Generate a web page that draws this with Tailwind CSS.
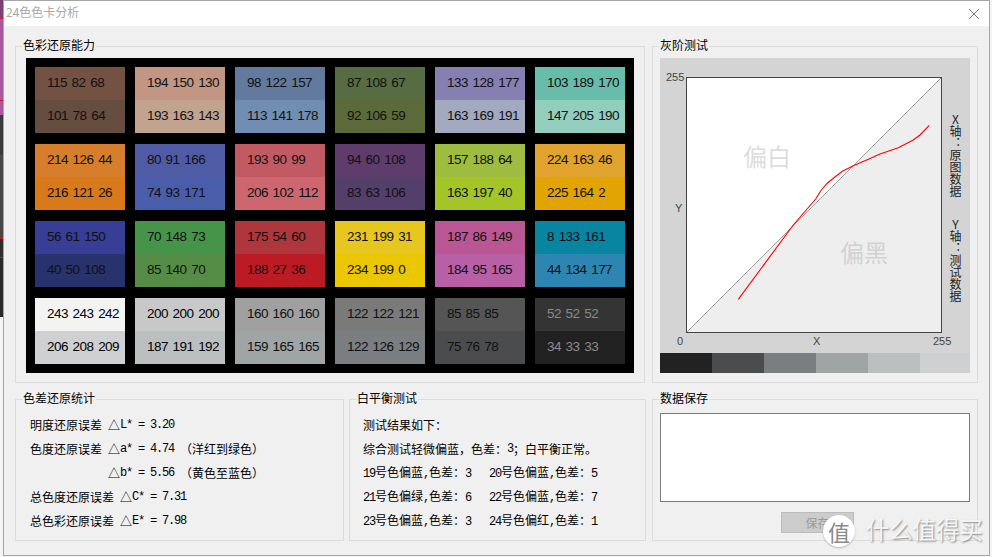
<!DOCTYPE html>
<html lang="zh-CN">

<head>
    <meta charset="UTF-8">
    <title>24色色卡分析</title>
    <script src="https://cdn.jsdelivr.net/npm/@tailwindcss/browser@4"></script>
</head>

<body class="bg-[#f4f4f4]">
    <div class="relative flex w-[992px] h-[557px] overflow-hidden text-[12px] text-black [font-family:'Noto_Sans_CJK_SC',sans-serif]">
        <!-- desktop behind the window -->
        <div class="w-[3px] h-[317px] flex flex-col shrink-0 bg-[#2a2a2a]">
            <div class="h-[18px] bg-[#7d3f74]"></div>
            <div class="h-px bg-[#e01010]"></div>
            <div class="h-[81px] bg-[#a8589c]"></div>
            <div class="h-px bg-[#e01010]"></div>
            <div class="h-[14px] bg-[#a8589c]"></div>
            <div class="h-[40px] bg-[#3a3a3a]"></div>
            <div class="h-px bg-[#e01010]"></div>
            <div class="h-[82px] bg-[#484848]"></div>
            <div class="h-px bg-[#e01010]"></div>
            <div class="h-[18px] bg-[#2e2e2e]"></div>
            <div class="h-px bg-[#e01010]"></div>
        </div>

        <div class="w-[987px] h-[556px] flex flex-col bg-[#f0f0f0] border border-[#a5a5a5] shrink-0">
            <div class="h-[25px] bg-white flex items-center justify-between pl-[2px] pr-[10px] shrink-0">
                <span class="text-[#a9a9a9] -mt-[3px]">24色色卡分析</span>
                <svg width="10" height="10" viewBox="0 0 10 10">
                    <path d="M0 0L10 10M10 0L0 10" stroke="#777777" stroke-width="1" fill="none" />
                </svg>
            </div>

            <div class="flex gap-[7px] pl-[11px] pt-[20px]">
                <!-- colour checker -->
                <div class="relative w-[630px] h-[337px] border border-[#dcdcdc] pt-[11px] pl-[10px]">
                    <span class="absolute -top-[10px] left-[6px] px-px bg-[#f0f0f0] leading-[16px]">色彩还原能力</span>
                    <div class="w-[608px] h-[315px] bg-black p-[9px] grid grid-cols-6 gap-x-[10px] gap-y-[11px] text-[13.5px] tracking-[-0.55px] [word-spacing:1.5px] text-[#111111] [font-family:'Liberation_Sans',sans-serif]">
                        <div class="h-[66px] grid grid-rows-2"><div class="pl-[12px] flex items-center bg-[rgb(115,82,68)]">115 82 68</div><div class="pl-[12px] flex items-center bg-[rgb(101,78,64)]">101 78 64</div></div>
                        <div class="h-[66px] grid grid-rows-2"><div class="pl-[12px] flex items-center bg-[rgb(194,150,130)]">194 150 130</div><div class="pl-[12px] flex items-center bg-[rgb(193,163,143)]">193 163 143</div></div>
                        <div class="h-[66px] grid grid-rows-2"><div class="pl-[12px] flex items-center bg-[rgb(98,122,157)]">98 122 157</div><div class="pl-[12px] flex items-center bg-[rgb(113,141,178)]">113 141 178</div></div>
                        <div class="h-[66px] grid grid-rows-2"><div class="pl-[12px] flex items-center bg-[rgb(87,108,67)]">87 108 67</div><div class="pl-[12px] flex items-center bg-[rgb(92,106,59)]">92 106 59</div></div>
                        <div class="h-[66px] grid grid-rows-2"><div class="pl-[12px] flex items-center bg-[rgb(133,128,177)]">133 128 177</div><div class="pl-[12px] flex items-center bg-[rgb(163,169,191)]">163 169 191</div></div>
                        <div class="h-[66px] grid grid-rows-2"><div class="pl-[12px] flex items-center bg-[rgb(103,189,170)]">103 189 170</div><div class="pl-[12px] flex items-center bg-[rgb(147,205,190)]">147 205 190</div></div>

                        <div class="h-[66px] grid grid-rows-2"><div class="pl-[12px] flex items-center bg-[rgb(214,126,44)]">214 126 44</div><div class="pl-[12px] flex items-center bg-[rgb(216,121,26)]">216 121 26</div></div>
                        <div class="h-[66px] grid grid-rows-2"><div class="pl-[12px] flex items-center bg-[rgb(80,91,166)]">80 91 166</div><div class="pl-[12px] flex items-center bg-[rgb(74,93,171)]">74 93 171</div></div>
                        <div class="h-[66px] grid grid-rows-2"><div class="pl-[12px] flex items-center bg-[rgb(193,90,99)]">193 90 99</div><div class="pl-[12px] flex items-center bg-[rgb(206,102,112)]">206 102 112</div></div>
                        <div class="h-[66px] grid grid-rows-2"><div class="pl-[12px] flex items-center bg-[rgb(94,60,108)]">94 60 108</div><div class="pl-[12px] flex items-center bg-[rgb(83,63,106)]">83 63 106</div></div>
                        <div class="h-[66px] grid grid-rows-2"><div class="pl-[12px] flex items-center bg-[rgb(157,188,64)]">157 188 64</div><div class="pl-[12px] flex items-center bg-[rgb(163,197,40)]">163 197 40</div></div>
                        <div class="h-[66px] grid grid-rows-2"><div class="pl-[12px] flex items-center bg-[rgb(224,163,46)]">224 163 46</div><div class="pl-[12px] flex items-center bg-[rgb(225,164,2)]">225 164 2</div></div>

                        <div class="h-[66px] grid grid-rows-2"><div class="pl-[12px] flex items-center bg-[rgb(56,61,150)]">56 61 150</div><div class="pl-[12px] flex items-center bg-[rgb(40,50,108)]">40 50 108</div></div>
                        <div class="h-[66px] grid grid-rows-2"><div class="pl-[12px] flex items-center bg-[rgb(70,148,73)]">70 148 73</div><div class="pl-[12px] flex items-center bg-[rgb(85,140,70)]">85 140 70</div></div>
                        <div class="h-[66px] grid grid-rows-2"><div class="pl-[12px] flex items-center bg-[rgb(175,54,60)]">175 54 60</div><div class="pl-[12px] flex items-center bg-[rgb(188,27,36)]">188 27 36</div></div>
                        <div class="h-[66px] grid grid-rows-2"><div class="pl-[12px] flex items-center bg-[rgb(231,199,31)]">231 199 31</div><div class="pl-[12px] flex items-center bg-[rgb(234,199,0)]">234 199 0</div></div>
                        <div class="h-[66px] grid grid-rows-2"><div class="pl-[12px] flex items-center bg-[rgb(187,86,149)]">187 86 149</div><div class="pl-[12px] flex items-center bg-[rgb(184,95,165)]">184 95 165</div></div>
                        <div class="h-[66px] grid grid-rows-2"><div class="pl-[12px] flex items-center bg-[rgb(8,133,161)]">8 133 161</div><div class="pl-[12px] flex items-center bg-[rgb(44,134,177)]">44 134 177</div></div>

                        <div class="h-[66px] grid grid-rows-2"><div class="pl-[12px] flex items-center text-black bg-[rgb(243,243,242)]">243 243 242</div><div class="pl-[12px] flex items-center text-black bg-[rgb(206,208,209)]">206 208 209</div></div>
                        <div class="h-[66px] grid grid-rows-2"><div class="pl-[12px] flex items-center text-black bg-[rgb(200,200,200)]">200 200 200</div><div class="pl-[12px] flex items-center text-black bg-[rgb(187,191,192)]">187 191 192</div></div>
                        <div class="h-[66px] grid grid-rows-2"><div class="pl-[12px] flex items-center bg-[rgb(160,160,160)]">160 160 160</div><div class="pl-[12px] flex items-center bg-[rgb(159,165,165)]">159 165 165</div></div>
                        <div class="h-[66px] grid grid-rows-2"><div class="pl-[12px] flex items-center bg-[rgb(122,122,121)]">122 122 121</div><div class="pl-[12px] flex items-center bg-[rgb(122,126,129)]">122 126 129</div></div>
                        <div class="h-[66px] grid grid-rows-2"><div class="pl-[12px] flex items-center bg-[rgb(85,85,85)]">85 85 85</div><div class="pl-[12px] flex items-center bg-[rgb(75,76,78)]">75 76 78</div></div>
                        <div class="h-[66px] grid grid-rows-2"><div class="pl-[12px] flex items-center text-[#8a8a8a] bg-[rgb(52,52,52)]">52 52 52</div><div class="pl-[12px] flex items-center text-[#8a8a8a] bg-[rgb(34,33,33)]">34 33 33</div></div>
                    </div>
                </div>

                <!-- grey scale -->
                <div class="relative w-[326px] h-[337px] border border-[#dcdcdc] pt-[11px] pl-[7px]">
                    <span class="absolute -top-[10px] left-[6px] px-px bg-[#f0f0f0] leading-[16px]">灰阶测试</span>
                    <div class="w-[310px] h-[315px] bg-[#d4d4d4] flex flex-col">
                        <div class="flex pt-[19px]">
                            <div class="w-[26px] shrink-0 text-[11px] text-[#444444] [font-family:'Liberation_Sans',sans-serif]">
                                <div class="pl-[6px] leading-none -mt-[5px]">255</div>
                                <div class="pl-[15px] mt-[120px] leading-none">Y</div>
                            </div>
                            <svg width="256" height="256" viewBox="0 0 256 256" class="shrink-0">
                                <rect width="256" height="256" fill="#ffffff" />
                                <path d="M0 256L256 0V256Z" fill="#eeeeee" />
                                <path d="M0 256L256 0" stroke="#a0a0a0" stroke-width="1" fill="none" />
                                <rect x="0.5" y="0.5" width="255" height="255" fill="none" stroke="#444444" />
                                <path d="M52.3 222.3L107.3 148L129.7 122L135 113.5L141 106.5L147 101.5L156 94.5L167.3 88.7L180.7 83L194 77L212.3 70.7L227.3 63L234 58L243.3 48.3" stroke="#ff0000" stroke-width="1.1" fill="none" />
                                <text x="57" y="89" font-size="24" fill="#dddddd">偏白</text>
                                <text x="154" y="185" font-size="24" fill="#d2d2d2">偏黑</text>
                            </svg>
                            <div class="w-[26px] pt-[36px] flex flex-col items-center text-[#222222]">
                                <span class="[writing-mode:vertical-rl] [text-orientation:upright] leading-[14px]">X轴：原图数据</span>
                                <span class="mt-[21px] [writing-mode:vertical-rl] [text-orientation:upright] leading-[14px]">Y轴：测试数据</span>
                            </div>
                        </div>
                        <div class="flex-1 relative text-[11px] text-[#444444] [font-family:'Liberation_Sans',sans-serif]">
                            <span class="absolute left-[17px] top-0">0</span>
                            <span class="absolute left-[153px] top-0">X</span>
                            <span class="absolute left-[273px] top-0">255</span>
                        </div>
                        <div class="h-[20px] grid grid-cols-[52px_52px_52px_52px_52px_50px] shrink-0">
                            <div class="bg-[#222222]"></div>
                            <div class="bg-[#4b4c4e]"></div>
                            <div class="bg-[#7a7e81]"></div>
                            <div class="bg-[#9fa5a5]"></div>
                            <div class="bg-[#bbbfc0]"></div>
                            <div class="bg-[#ced0d1]"></div>
                        </div>
                    </div>
                </div>
            </div>

            <div class="flex pl-[11px] pt-[16px]">
                <!-- colour difference -->
                <div class="relative w-[329px] h-[142px] border border-[#dcdcdc] pt-[13px] pl-[14px] flex flex-col">
                    <span class="absolute -top-[10px] left-[6px] px-px bg-[#f0f0f0] leading-[16px]">色差还原统计</span>
                    <div class="h-[24px] whitespace-pre flex items-center">明度还原误差<span class="[font-family:'Liberation_Mono'] tracking-[-1.2px]"> </span>△<span class="[font-family:'Liberation_Mono'] tracking-[-1.2px]">L* = 3.20</span></div>
                    <div class="h-[24px] whitespace-pre flex items-center">色度还原误差<span class="[font-family:'Liberation_Mono'] tracking-[-1.2px]"> </span>△<span class="[font-family:'Liberation_Mono'] tracking-[-1.2px]">a* = 4.74 </span>（洋红到绿色）</div>
                    <div class="h-[24px] whitespace-pre flex items-center pl-[78px]">△<span class="[font-family:'Liberation_Mono'] tracking-[-1.2px]">b* = 5.56 </span>（黄色至蓝色）</div>
                    <div class="h-[24px] whitespace-pre flex items-center">总色度还原误差<span class="[font-family:'Liberation_Mono'] tracking-[-1.2px]"> </span>△<span class="[font-family:'Liberation_Mono'] tracking-[-1.2px]">C* = 7.31</span></div>
                    <div class="h-[24px] whitespace-pre flex items-center">总色彩还原误差<span class="[font-family:'Liberation_Mono'] tracking-[-1.2px]"> </span>△<span class="[font-family:'Liberation_Mono'] tracking-[-1.2px]">E* = 7.98</span></div>
                </div>

                <!-- white balance -->
                <div class="relative w-[297px] h-[142px] ml-[5px] border border-[#dcdcdc] pt-[13px] pl-[13px] flex flex-col">
                    <span class="absolute -top-[10px] left-[6px] px-px bg-[#f0f0f0] leading-[16px]">白平衡测试</span>
                    <div class="h-[24px] flex items-center">测试结果如下：</div>
                    <div class="h-[24px] whitespace-pre flex items-center">综合测试轻微偏蓝，色差：<span class="[font-family:'Liberation_Mono'] tracking-[-1.2px]">3</span>；白平衡正常。</div>
                    <div class="h-[24px] grid grid-cols-[126px_1fr] items-center">
                        <div class="whitespace-pre"><span class="[font-family:'Liberation_Mono'] tracking-[-1.2px]">19</span>号色偏蓝<span class="[font-family:'Liberation_Mono'] tracking-[-1.2px]">,</span>色差：<span class="[font-family:'Liberation_Mono'] tracking-[-1.2px]">3</span></div>
                        <div class="whitespace-pre"><span class="[font-family:'Liberation_Mono'] tracking-[-1.2px]">20</span>号色偏蓝<span class="[font-family:'Liberation_Mono'] tracking-[-1.2px]">,</span>色差：<span class="[font-family:'Liberation_Mono'] tracking-[-1.2px]">5</span></div>
                    </div>
                    <div class="h-[24px] grid grid-cols-[126px_1fr] items-center">
                        <div class="whitespace-pre"><span class="[font-family:'Liberation_Mono'] tracking-[-1.2px]">21</span>号色偏绿<span class="[font-family:'Liberation_Mono'] tracking-[-1.2px]">,</span>色差：<span class="[font-family:'Liberation_Mono'] tracking-[-1.2px]">6</span></div>
                        <div class="whitespace-pre"><span class="[font-family:'Liberation_Mono'] tracking-[-1.2px]">22</span>号色偏蓝<span class="[font-family:'Liberation_Mono'] tracking-[-1.2px]">,</span>色差：<span class="[font-family:'Liberation_Mono'] tracking-[-1.2px]">7</span></div>
                    </div>
                    <div class="h-[24px] grid grid-cols-[126px_1fr] items-center">
                        <div class="whitespace-pre"><span class="[font-family:'Liberation_Mono'] tracking-[-1.2px]">23</span>号色偏蓝<span class="[font-family:'Liberation_Mono'] tracking-[-1.2px]">,</span>色差：<span class="[font-family:'Liberation_Mono'] tracking-[-1.2px]">3</span></div>
                        <div class="whitespace-pre"><span class="[font-family:'Liberation_Mono'] tracking-[-1.2px]">24</span>号色偏红<span class="[font-family:'Liberation_Mono'] tracking-[-1.2px]">,</span>色差：<span class="[font-family:'Liberation_Mono'] tracking-[-1.2px]">1</span></div>
                    </div>
                </div>

                <!-- save -->
                <div class="relative w-[326px] h-[142px] ml-[6px] border border-[#dcdcdc] pt-[13px] pl-[7px]">
                    <span class="absolute -top-[10px] left-[6px] px-px bg-[#f0f0f0] leading-[16px]">数据保存</span>
                    <textarea class="block w-[310px] h-[89px] bg-white border border-[#7a7a7a] outline-none resize-none"></textarea>
                    <button class="block w-[73px] h-[21px] ml-[121px] mt-[10px] bg-[#cccccc] border border-[#bdbdbd] text-[#999999] text-[12px] leading-none">保存</button>
                </div>
            </div>
        </div>

        <!-- site watermark -->
        <div class="absolute left-[823px] top-[515px] flex items-center gap-[11px] pointer-events-none">
            <div class="w-[32px] h-[32px] rounded-full bg-white shadow-[0_1px_2px_rgba(0,0,0,0.25)] flex items-center justify-center text-[22px] leading-none text-[#8a8a8a]">值</div>
            <span class="mb-[2px] text-[23.4px] leading-none whitespace-nowrap text-white/85 [text-shadow:1px_1px_2px_rgba(0,0,0,0.45)]">什么值得买</span>
        </div>
    </div>
</body>

</html>
